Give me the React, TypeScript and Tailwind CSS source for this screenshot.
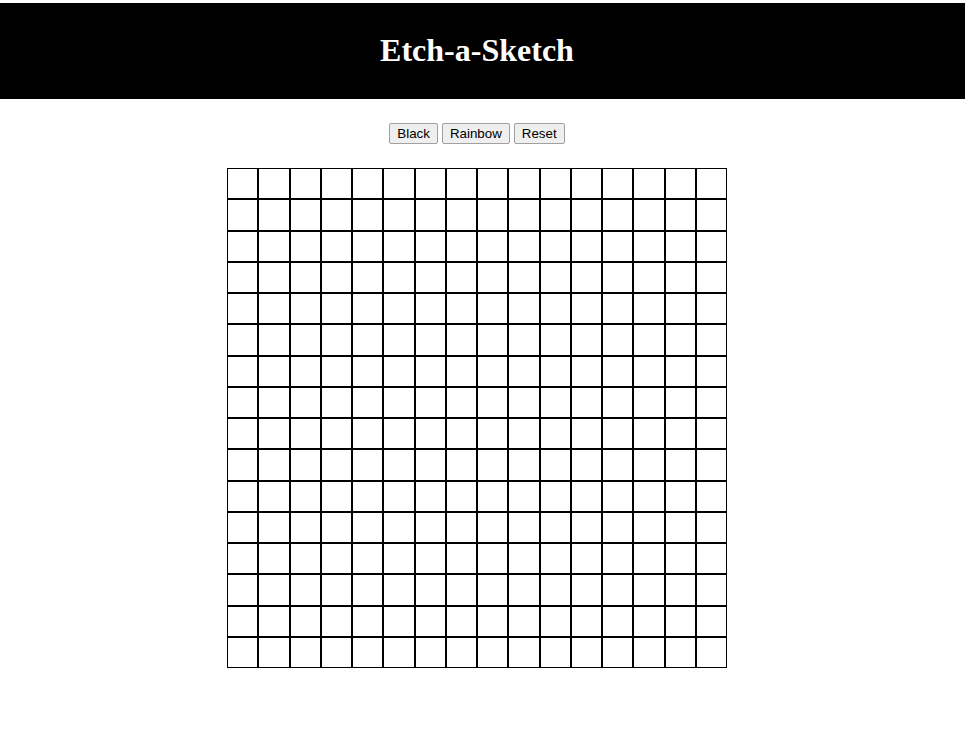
const SIZE = 16;

const Cell = () => <div className="border border-black bg-white" />;

const App = () => {
  const cells = Array.from({ length: SIZE * SIZE });

  return (
    <div className="min-h-screen bg-white">
      <header className="mt-[3px] flex h-[96px] items-center justify-center bg-black pb-[2px] pr-[11px]">
        <h1 className="font-['Liberation_Serif',serif] text-[32px] font-bold text-white">
          Etch-a-Sketch
        </h1>
      </header>

      <div className="flex w-[954px] flex-col items-center">
        <div className="mt-[24px] flex gap-[4px] font-['Liberation_Sans',Arial,sans-serif] text-[13.33px] text-black">
          <button className="h-[21px] rounded-[2px] border border-[#a0a0a0] bg-[#efefef] px-[7px]">
            Black
          </button>
          <button className="h-[21px] rounded-[2px] border border-[#a0a0a0] bg-[#efefef] px-[7px]">
            Rainbow
          </button>
          <button className="h-[21px] rounded-[2px] border border-[#a0a0a0] bg-[#efefef] px-[7px]">
            Reset
          </button>
        </div>

        <div className="mt-[24px] grid h-[500px] w-[500px] grid-cols-16 grid-rows-16">
          {cells.map((_, i) => (
            <Cell key={i} />
          ))}
        </div>
      </div>
    </div>
  );
};

export default App;
